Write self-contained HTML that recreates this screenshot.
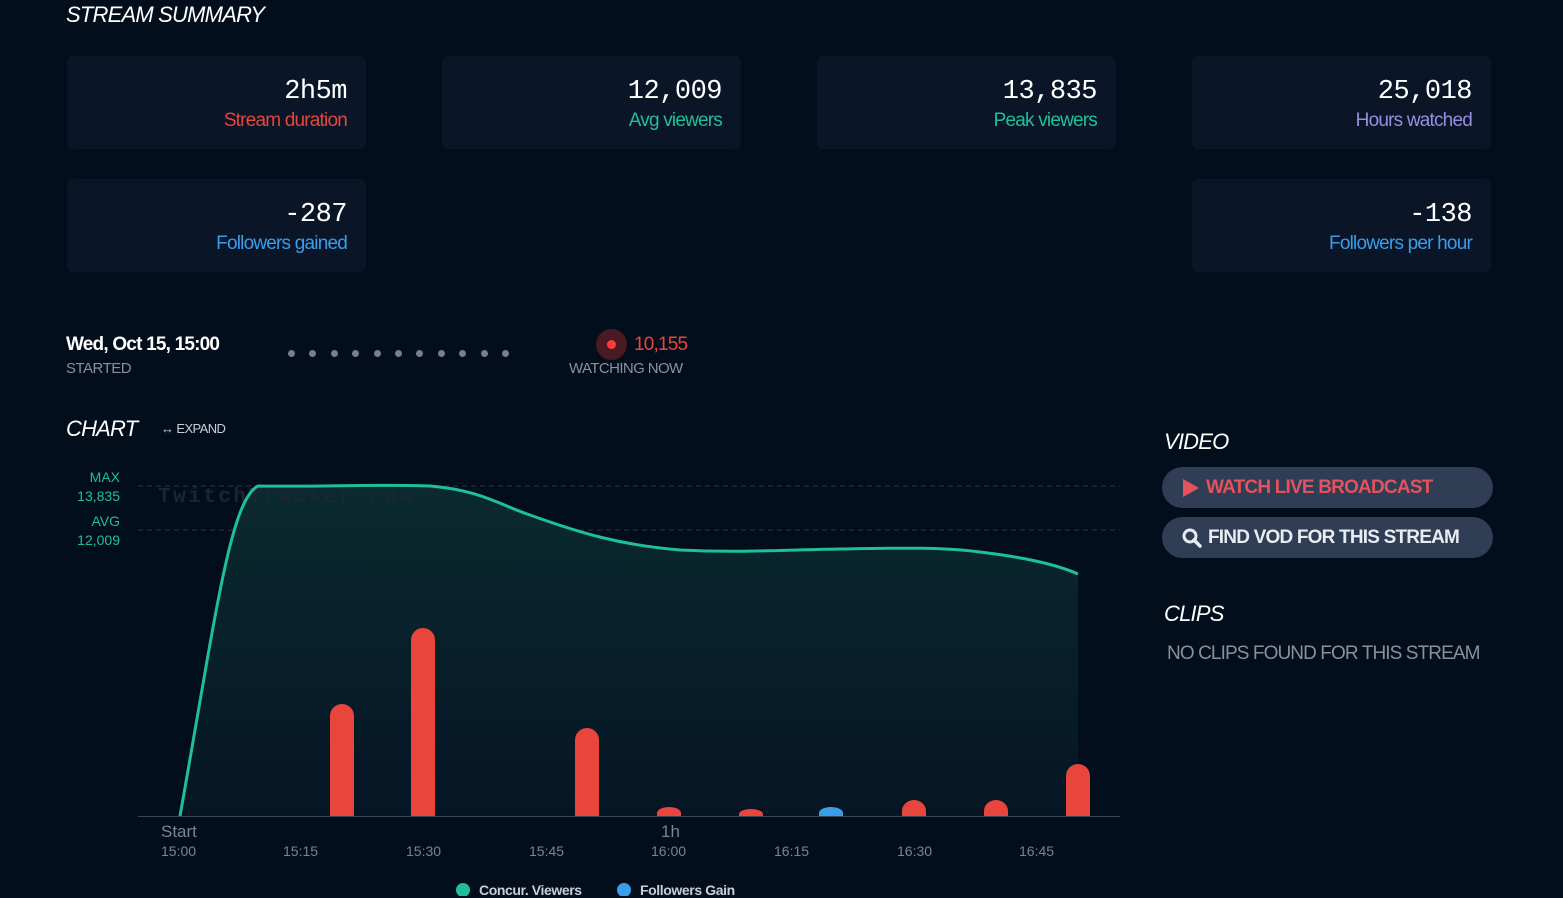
<!DOCTYPE html>
<html><head><style>
body{margin:0;width:1563px;height:896px;background:#020e1c;font-family:"Liberation Sans",sans-serif;color:#fff;overflow:hidden;position:relative}
.a{position:absolute}
h2{position:absolute;margin:0;font-style:italic;font-weight:normal;font-size:22px;letter-spacing:-0.8px;color:#fff}
.card{position:absolute;width:299px;height:93px;background:#0a1628;border-radius:6px;text-align:right}
.card .n{position:absolute;right:19px;top:21px;font-family:"Liberation Mono",monospace;font-size:27px;color:#fff;letter-spacing:-0.5px}
.card .l{position:absolute;right:19px;top:54px;font-size:19px;letter-spacing:-0.8px}
.btn{position:absolute;left:1162px;width:331px;height:41px;background:#2f3d55;border-radius:21px;font-weight:bold;font-size:19px;letter-spacing:-0.8px}
.dot{position:absolute;width:7px;height:7px;border-radius:50%;background:#7a7f87;top:350px}
.tl{position:absolute;top:843px;font-size:14px;color:#7c8390}
</style></head><body>
<h2 style="left:66px;top:2px">STREAM SUMMARY</h2>
<div class="card" style="left:67px;top:56px"><div class="n">2h5m</div><div class="l" style="color:#e8453c">Stream duration</div></div>
<div class="card" style="left:442px;top:56px"><div class="n">12,009</div><div class="l" style="color:#1fbf9a">Avg viewers</div></div>
<div class="card" style="left:817px;top:56px"><div class="n">13,835</div><div class="l" style="color:#1fbf9a">Peak viewers</div></div>
<div class="card" style="left:1192px;top:56px"><div class="n">25,018</div><div class="l" style="color:#9a8ce0">Hours watched</div></div>
<div class="card" style="left:67px;top:179px"><div class="n">-287</div><div class="l" style="color:#3a9de8">Followers gained</div></div>
<div class="card" style="left:1192px;top:179px"><div class="n">-138</div><div class="l" style="color:#3a9de8">Followers per hour</div></div>

<div class="a" style="left:66px;top:334px;font-size:19px;font-weight:bold;letter-spacing:-0.8px">Wed, Oct 15, 15:00</div>
<div class="a" style="left:66px;top:360px;font-size:15px;color:#8a9099;letter-spacing:-0.5px">STARTED</div>
<div class="dot" style="left:288px"></div><div class="dot" style="left:309px"></div><div class="dot" style="left:331px"></div><div class="dot" style="left:352px"></div><div class="dot" style="left:374px"></div><div class="dot" style="left:395px"></div><div class="dot" style="left:416px"></div><div class="dot" style="left:438px"></div><div class="dot" style="left:459px"></div><div class="dot" style="left:481px"></div><div class="dot" style="left:502px"></div>
<div class="a" style="left:596px;top:329px;width:31px;height:31px;border-radius:50%;background:#4a1a22"></div>
<div class="a" style="left:607px;top:340px;width:9px;height:9px;border-radius:50%;background:#ff3b3b"></div>
<div class="a" style="left:634px;top:334px;font-size:19px;color:#ef4438;letter-spacing:-0.8px">10,155</div>
<div class="a" style="left:569px;top:360px;font-size:15px;color:#8a9099;letter-spacing:-0.6px">WATCHING NOW</div>

<h2 style="left:66px;top:416px">CHART</h2>
<div class="a" style="left:161px;top:421px;font-size:13px;color:#c8cdd6;letter-spacing:-0.6px">↔ EXPAND</div>
<div class="a" style="left:60px;top:468px;width:60px;text-align:right;font-size:14px;color:#1fbf9a;line-height:19px">MAX<br>13,835</div>
<div class="a" style="left:60px;top:512px;width:60px;text-align:right;font-size:14px;color:#1fbf9a;line-height:19px">AVG<br>12,009</div>

<svg class="a" style="left:0;top:0" width="1563" height="896">
<defs><linearGradient id="g" x1="0" y1="0" x2="0" y2="1"><stop offset="0" stop-color="#0a2a2f"/><stop offset="1" stop-color="#061524"/></linearGradient></defs>
<line x1="138" y1="486" x2="1120" y2="486" stroke="#2a3546" stroke-dasharray="5,4"/>
<line x1="138" y1="530" x2="1120" y2="530" stroke="#2a3546" stroke-dasharray="5,4"/>
<path d="M180 816 C215 620 230 500 258 486 C320 487 380 484 430 486 C480 490 500 505 530 515 C580 533 620 545 680 550 C740 553 780 550 840 549 C900 548 940 547 980 552 C1030 558 1060 566 1078 574 L1078 816 Z" fill="url(#g)"/>
<text x="158" y="502" font-family="Liberation Mono,monospace" font-size="21" font-weight="bold" fill="#1a2634" textLength="254">TwitchTracker.com</text>
<g fill="#e8453c">
<path d="M330 816 V716 a12 12 0 0 1 24 0 V816Z"/>
<path d="M411 816 V640 a12 12 0 0 1 24 0 V816Z"/>
<path d="M575 816 V740 a12 12 0 0 1 24 0 V816Z"/>
<path d="M657 816 V813 a12 6 0 0 1 24 0 V816Z"/>
<path d="M739 816 V814 a12 5 0 0 1 24 0 V816Z"/>
<path d="M902 816 V811 a12 11 0 0 1 24 0 V816Z"/>
<path d="M984 816 V811 a12 11 0 0 1 24 0 V816Z"/>
<path d="M1066 816 V776 a12 12 0 0 1 24 0 V816Z"/>
</g>
<path d="M819 816 V813 a12 6 0 0 1 24 0 V816Z" fill="#3a9de8"/>
<path d="M180 816 C215 620 230 500 258 486 C320 487 380 484 430 486 C480 490 500 505 530 515 C580 533 620 545 680 550 C740 553 780 550 840 549 C900 548 940 547 980 552 C1030 558 1060 566 1078 574" fill="none" stroke="#1fbf9a" stroke-width="3"/>
<line x1="138" y1="816.5" x2="1120" y2="816.5" stroke="#3a4452"/>
<circle cx="463" cy="890" r="7" fill="#1fbf9a"/><circle cx="624" cy="890" r="7" fill="#3a9de8"/>
</svg>
<div class="a" style="left:161px;top:822px;font-size:17px;color:#7c8390">Start</div>
<div class="a" style="left:661px;top:822px;font-size:17px;color:#7c8390">1h</div>
<div class="tl" style="left:161px">15:00</div><div class="tl" style="left:283px">15:15</div><div class="tl" style="left:406px">15:30</div><div class="tl" style="left:529px">15:45</div><div class="tl" style="left:651px">16:00</div><div class="tl" style="left:774px">16:15</div><div class="tl" style="left:897px">16:30</div><div class="tl" style="left:1019px">16:45</div>
<div class="a" style="left:479px;top:882px;font-size:14px;font-weight:bold;color:#c8cdd6;letter-spacing:-0.4px">Concur. Viewers</div>
<div class="a" style="left:640px;top:882px;font-size:14px;font-weight:bold;color:#c8cdd6;letter-spacing:-0.4px">Followers Gain</div>

<h2 style="left:1164px;top:429px">VIDEO</h2>
<div class="btn" style="top:467px;color:#e5515c"><svg class="a" style="left:20px;top:11px" width="18" height="20"><path d="M1 1 L17 10 L1 19Z" fill="#e5515c"/></svg><span class="a" style="left:44px;top:10px">WATCH LIVE BROADCAST</span></div>
<div class="btn" style="top:517px;color:#e8ecf2"><svg class="a" style="left:20px;top:11px" width="20" height="20"><circle cx="8" cy="8" r="6" fill="none" stroke="#e8ecf2" stroke-width="3"/><path d="M12 12 L18 18" stroke="#e8ecf2" stroke-width="3.5" stroke-linecap="round"/></svg><span class="a" style="left:46px;top:10px">FIND VOD FOR THIS STREAM</span></div>
<h2 style="left:1164px;top:601px">CLIPS</h2>
<div class="a" style="left:1167px;top:643px;font-size:19px;color:#8a9099;letter-spacing:-0.9px">NO CLIPS FOUND FOR THIS STREAM</div>
</body></html>
